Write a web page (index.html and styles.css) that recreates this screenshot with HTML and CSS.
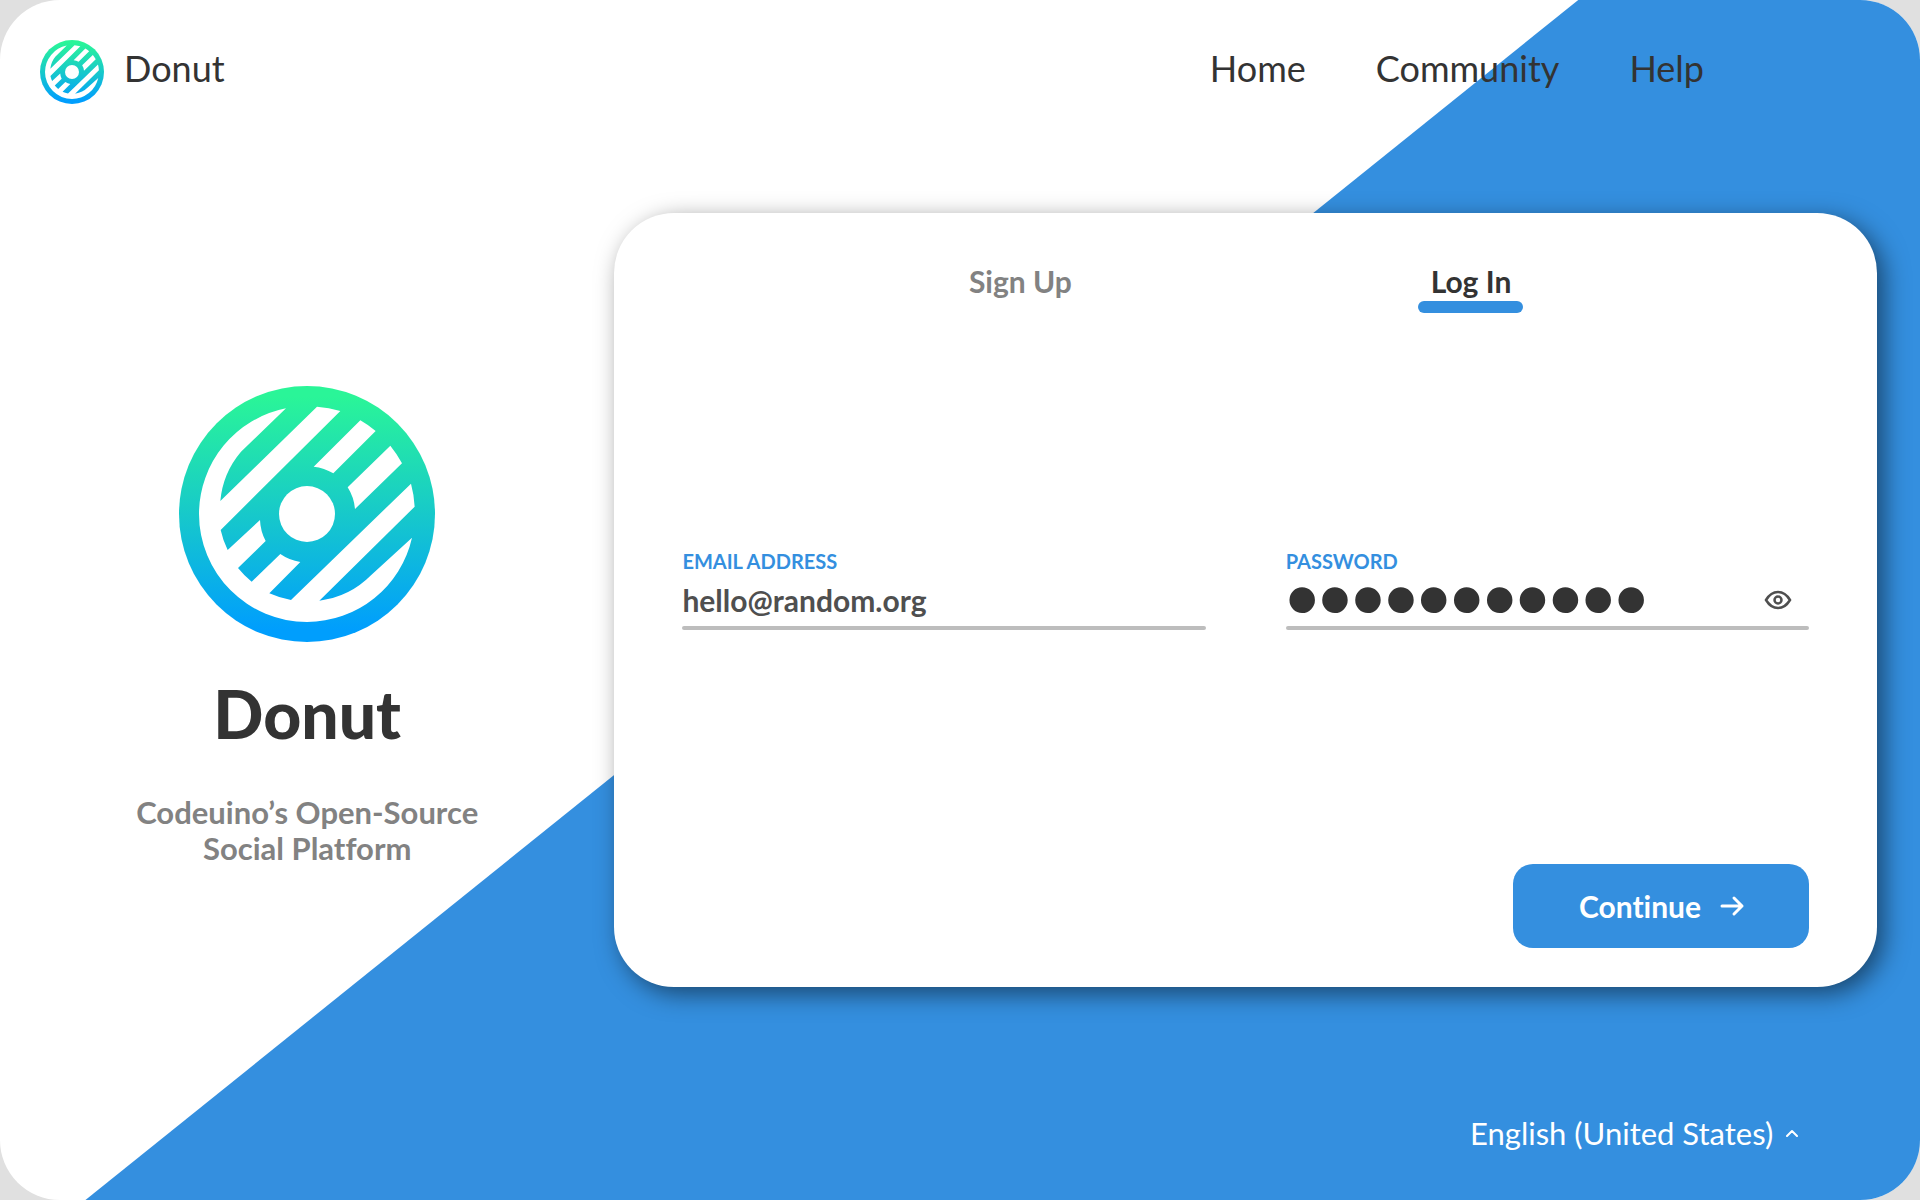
FILE: index.html
```html
<!DOCTYPE html>
<html lang="en">
<head>
<meta charset="utf-8">
<meta name="viewport" content="width=device-width, initial-scale=1">
<title>Donut – Log In</title>
<link rel="stylesheet" href="styles.css">
</head>
<body>
<svg class="sprite" aria-hidden="true">
  <defs>
    <linearGradient id="donut-fill" x1="0" y1="0" x2="0" y2="1">
      <stop offset="0" stop-color="#2af598"/>
      <stop offset="0.04" stop-color="#2af598"/>
      <stop offset="0.5" stop-color="#17c9ca"/>
      <stop offset="0.95" stop-color="#009efd"/>
    </linearGradient>
    <symbol id="donut" viewBox="54 48 768 768">
      <circle cx="438" cy="432" r="384" fill="url(#donut-fill)"/>
      <g fill="#fff">
        <circle cx="438" cy="432" r="84"/>
        <path d="M375 115A324 324 0 0 0 114 432A324 324 0 0 0 438 756A324 324 0 0 0 753 503L630 616A264 264 0 0 1 475 692L761 410A324 324 0 0 0 750 341L390 690A264 264 0 0 1 325 670L418 576A144 144 0 0 1 358 552L272 635A264 264 0 0 1 231 594L314 513A144 144 0 0 1 297 450L200 540A264 264 0 0 1 179 480L538 123A324 324 0 0 0 468 110L178 393A264 264 0 0 1 240 245Z"/>
        <path d="M598 151A324 324 0 0 1 644 183L517 310A144 144 0 0 0 458 290Z"/>
        <path d="M688 227A324 324 0 0 1 723 280L582 417A144 144 0 0 0 560 352Z"/>
      </g>
    </symbol>
  </defs>
</svg>
<div class="page">
  <header class="header">
    <a class="brand" href="#">
      <svg class="brand-logo" aria-hidden="true"><use href="#donut"/></svg>
      <span>Donut</span>
    </a>
    <nav class="nav">
      <a href="#">Home</a>
      <a href="#">Community</a>
      <a href="#">Help</a>
    </nav>
  </header>

  <main class="main">
    <section class="intro">
      <svg class="intro-logo" aria-hidden="true"><use href="#donut"/></svg>
      <h1 class="intro-title">Donut</h1>
      <p class="intro-text">Codeuino’s Open-Source<br>Social Platform</p>
    </section>

    <section class="card">
      <div class="tabs">
        <button class="tab" type="button">Sign Up</button>
        <button class="tab tab-active" type="button">Log In</button>
      </div>
      <form class="form">
        <div class="fields">
          <div class="field">
            <label class="label" for="email">EMAIL ADDRESS</label>
            <div class="control">
              <input class="input" id="email" type="email" value="hello@random.org">
            </div>
          </div>
          <div class="field">
            <label class="label" for="password">PASSWORD</label>
            <div class="control">
              <input class="input input-password" id="password" type="password" value="randompass1">
              <button class="reveal" type="button" aria-label="Show password">
                <svg class="reveal-icon" viewBox="0 0 28 20" aria-hidden="true">
                  <path d="M2 10C5 5 9 2 14 2s9 3 12 8c-3 5-7 8-12 8s-9-3-12-8Z"/>
                  <circle cx="14" cy="10" r="3.5"/>
                </svg>
              </button>
            </div>
          </div>
        </div>
        <button class="continue" type="submit">
          <span>Continue</span>
          <svg class="continue-icon" viewBox="0 0 22 20" aria-hidden="true">
            <path d="M1 10H21M13 2L21 10L13 18"/>
          </svg>
        </button>
      </form>
    </section>
  </main>

  <footer class="footer">
    <label class="language">
      <select class="language-select" aria-label="Language">
        <option>English (United States)</option>
        <option>Deutsch</option>
        <option>Español</option>
      </select>
      <svg class="language-icon" viewBox="0 0 12 8" aria-hidden="true"><path d="M1 7L6 2L11 7"/></svg>
    </label>
  </footer>
</div>
</body>
</html>
```
FILE: styles.css
```css
:root {
  --blue: #348fdf;
  --ink: #333;
  --grey: #828282;
}

* {
  box-sizing: border-box;
}

body {
  margin: 0;
  background: #e0e0e0;
  color: var(--ink);
  font-family: Lato, "Open Sans", sans-serif;
  font-variant-ligatures: none;
}

button,
input,
select {
  margin: 0;
  padding: 0;
  border: 0;
  background: none;
  color: inherit;
  font: inherit;
  font-variant-ligatures: none;
}

a {
  color: inherit;
  text-decoration: none;
}

svg {
  display: block;
  flex: none;
}

.sprite {
  position: absolute;
  width: 0;
  height: 0;
}

.page {
  position: relative;
  isolation: isolate;
  display: flex;
  flex-direction: column;
  min-height: 100vh;
  overflow: hidden;
  border-radius: 60px;
  background: #fff;
}

/* Diagonal blue backdrop */
.page::before {
  content: "";
  position: absolute;
  inset: 0;
  z-index: -1;
  background: var(--blue);
  clip-path: polygon(82.2% 0, 100% 0, 100% 100%, 4.45% 100%);
}

.header {
  display: flex;
  align-items: center;
  justify-content: space-between;
  padding: 40px 216px 109px 40px;
  font-size: 36px;
  line-height: 40px;
}

.brand {
  display: flex;
  gap: 20px;
}

.brand-logo {
  width: 64px;
  height: 64px;
}

.brand span,
.nav {
  padding-top: 8px;
}

.nav {
  display: flex;
  align-self: flex-start;
  gap: 70px;
}

.main {
  flex: 1;
  display: grid;
  grid-template-columns: 32vw minmax(0, 1fr);
  padding-right: 43px;
}

.intro {
  display: flex;
  flex-direction: column;
  align-items: center;
  padding-top: 173px;
  text-align: center;
}

.intro-logo {
  width: 256px;
  height: 256px;
}

.intro-title {
  margin: 32px 0 0;
  font-size: 66px;
  font-weight: 900;
  line-height: 80px;
}

.intro-text {
  margin: 40px 0 0;
  color: var(--grey);
  font-size: 31px;
  font-weight: 700;
  line-height: 36px;
}

.card {
  display: flex;
  flex-direction: column;
  padding: 48px 68px 39px;
  border-radius: 60px;
  background: #fff;
  box-shadow: 7px 7px 24px rgba(0, 0, 0, 0.5);
}

.tabs {
  display: flex;
  justify-content: center;
  gap: 18vw;
}

.tab {
  display: flex;
  flex-direction: column;
  align-items: center;
  min-width: 105px;
  color: var(--grey);
  font-size: 30px;
  font-weight: 700;
  line-height: 40px;
  cursor: pointer;
}

.tab-active {
  color: var(--ink);
}

.tab-active::after {
  content: "";
  align-self: stretch;
  height: 12px;
  border-radius: 6px;
  background: var(--blue);
}

.form {
  flex: 1;
  display: flex;
  flex-direction: column;
  justify-content: space-between;
  padding-top: 236px;
}

.fields {
  display: grid;
  grid-template-columns: minmax(0, 1fr) minmax(0, 1fr);
  gap: 80px;
}

.field {
  display: flex;
  flex-direction: column;
}

.field::after {
  content: "";
  height: 4px;
  border-radius: 2px;
  background: #bdbdbd;
}

.label {
  color: var(--blue);
  font-size: 20px;
  font-weight: 700;
  line-height: 24px;
}

.control {
  display: flex;
  align-items: center;
  height: 53px;
}

.input {
  flex: 1;
  min-width: 0;
  height: 53px;
  outline: 0;
  color: #4f4f4f;
  font-size: 30px;
  font-weight: 700;
}

.input-password {
  color: var(--ink);
  font-family: "Liberation Sans", sans-serif;
  font-size: 94px;
  font-weight: 400;
}

.reveal {
  padding: 4px 17px;
  cursor: pointer;
}

.reveal-icon {
  width: 28px;
  height: 20px;
  fill: none;
  stroke: #4f4f4f;
  stroke-width: 2.5;
}

.continue {
  display: flex;
  align-items: center;
  align-self: flex-end;
  justify-content: center;
  gap: 20px;
  width: 296px;
  height: 84px;
  border-radius: 20px;
  background: var(--blue);
  color: #fff;
  font-size: 30px;
  font-weight: 700;
  cursor: pointer;
}

.continue-icon {
  width: 22px;
  height: 20px;
  overflow: visible;
  fill: none;
  stroke: #fff;
  stroke-width: 3;
  stroke-linecap: round;
  stroke-linejoin: round;
}

.footer {
  display: flex;
  justify-content: flex-end;
  padding: 126px 122px 47px;
  color: #fff;
  font-size: 31px;
  line-height: 40px;
}

.language {
  display: flex;
  align-items: center;
  gap: 12px;
}

.language-select {
  height: 40px;
  appearance: none;
  cursor: pointer;
}

.language-select option {
  color: var(--ink);
}

.language-icon {
  width: 12px;
  height: 8px;
  fill: none;
  stroke: #fff;
  stroke-width: 2;
  stroke-linecap: round;
  stroke-linejoin: round;
}
```
